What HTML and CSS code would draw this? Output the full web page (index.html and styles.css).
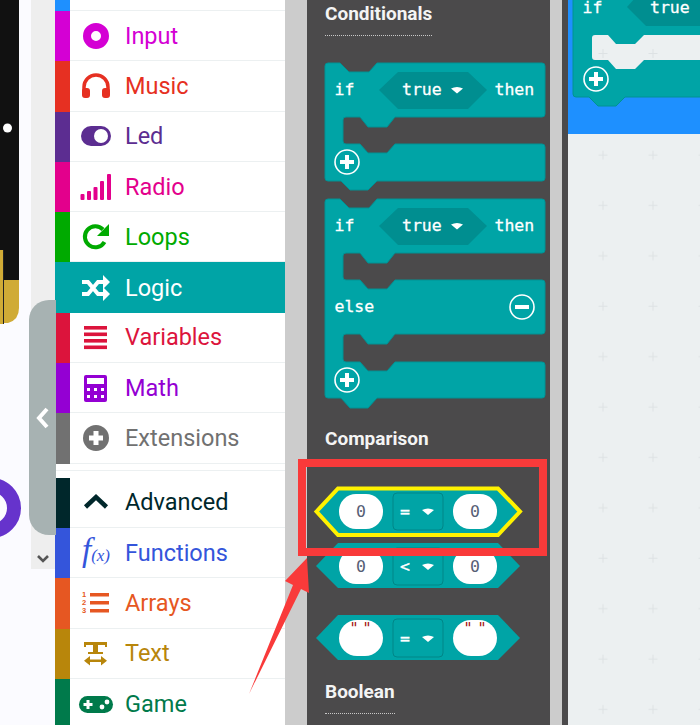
FILE: index.html
```html
<!DOCTYPE html>
<html lang="en">
<head>
    <meta charset="UTF-8">
    <title>Logic blocks</title>
    <link rel="stylesheet" href="styles.css">
</head>
<body>
<div class="editor">
    <!-- simulator edge -->
    <div class="sim">
        <svg class="sim-view" width="31" height="725" viewBox="0 0 31 725">
            <path d="M0 250 Q3 252 3 262 V323 H8 Q19 320 19 308 V280 H3 V250 Z" fill="#d0ab36"/>
            <path d="M0 250 Q3 252 3 262 V280 H19 V0 H0 Z" fill="#111"/>
            <rect x="0" y="250" width="3" height="74" fill="#d0ab36"/>
            <rect x="3" y="250" width="1" height="74" fill="#222"/>
            <circle cx="7.5" cy="128" r="4.5" fill="#fff"/>
            <circle cx="-9" cy="508" r="23" fill="none" stroke="#6633cc" stroke-width="14"/>
        </svg>
        <div class="sim-scroll">
            <svg class="scroll-down" width="14" height="10" viewBox="0 0 14 10"><path d="M2 2 L7 7 L12 2" fill="none" stroke="#555" stroke-width="2.6"/></svg>
        </div>
        <div class="sim-toggle">
            <svg width="14" height="22" viewBox="0 0 14 22"><path d="M11 2 L3 11 L11 20" fill="none" stroke="#fff" stroke-width="4"/></svg>
        </div>
    </div>

    <!-- toolbox -->
    <div class="toolbox">
        <div class="tb-row tb-cut c-basic"><span class="tb-bar"></span></div>
        <div class="tb-row c-input">
            <span class="tb-bar"></span>
            <span class="tb-icon"><svg width="32" height="32" viewBox="0 0 32 32"><circle cx="16" cy="16" r="9" fill="none" stroke="currentColor" stroke-width="8"/></svg></span>
            <span>Input</span>
        </div>
        <div class="tb-row c-music">
            <span class="tb-bar"></span>
            <span class="tb-icon"><svg width="32" height="32" viewBox="0 0 32 32"><path d="M4 22 V17 A12 12 0 0 1 28 17 V22" fill="none" stroke="currentColor" stroke-width="3.5"/><rect x="2" y="18" width="8" height="10" rx="3" fill="currentColor"/><rect x="22" y="18" width="8" height="10" rx="3" fill="currentColor"/></svg></span>
            <span>Music</span>
        </div>
        <div class="tb-row c-led">
            <span class="tb-bar"></span>
            <span class="tb-icon"><svg width="32" height="32" viewBox="0 0 32 32"><rect x="1" y="6" width="30" height="20" rx="10" fill="currentColor"/><circle cx="21" cy="16" r="7" fill="#fff"/></svg></span>
            <span>Led</span>
        </div>
        <div class="tb-row c-radio">
            <span class="tb-bar"></span>
            <span class="tb-icon"><svg width="32" height="32" viewBox="0 0 32 32" fill="currentColor"><rect x="0.5" y="23" width="4" height="6" rx="1"/><rect x="7" y="20" width="4" height="9" rx="1"/><rect x="13.5" y="16" width="4" height="13" rx="1"/><rect x="20" y="10" width="4" height="19" rx="1"/><rect x="27" y="3" width="4" height="26" rx="1"/></svg></span>
            <span>Radio</span>
        </div>
        <div class="tb-row c-loops">
            <span class="tb-bar"></span>
            <span class="tb-icon"><svg width="32" height="32" viewBox="0 0 32 32"><path d="M24.5 21 A10.5 10.5 0 1 1 23 8.5" fill="none" stroke="currentColor" stroke-width="4"/><path d="M29 3 V15 H17 Z" fill="currentColor"/></svg></span>
            <span>Loops</span>
        </div>
        <div class="tb-row tb-active">
            <span class="tb-bar"></span>
            <span class="tb-icon"><svg width="32" height="32" viewBox="0 0 32 32"><path d="M2 10 H8 L18 22 H24 M2 22 H8 L18 10 H24" fill="none" stroke="currentColor" stroke-width="4"/><path d="M23 3 L30 10 L23 17 Z M23 15 L30 22 L23 29 Z" fill="currentColor"/></svg></span>
            <span>Logic</span>
        </div>
        <div class="tb-row c-variables">
            <span class="tb-bar"></span>
            <span class="tb-icon"><svg width="32" height="32" viewBox="0 0 32 32" fill="currentColor"><rect x="4" y="5" width="23" height="3.6"/><rect x="4" y="11.5" width="23" height="3.6"/><rect x="4" y="18" width="23" height="3.6"/><rect x="4" y="24.5" width="23" height="3.6"/></svg></span>
            <span>Variables</span>
        </div>
        <div class="tb-row c-math">
            <span class="tb-bar"></span>
            <span class="tb-icon"><svg width="32" height="32" viewBox="0 0 32 32"><rect x="4" y="3" width="23" height="27" rx="2" fill="currentColor"/><rect x="7" y="6" width="17" height="6" fill="#fff"/><g fill="#fff"><rect x="7" y="16" width="3" height="3"/><rect x="14" y="16" width="3" height="3"/><rect x="21" y="16" width="3" height="3"/><rect x="7" y="23" width="3" height="3"/><rect x="14" y="23" width="3" height="3"/><rect x="21" y="23" width="3" height="3"/></g></svg></span>
            <span>Math</span>
        </div>
        <div class="tb-row c-extensions">
            <span class="tb-bar"></span>
            <span class="tb-icon"><svg width="32" height="32" viewBox="0 0 32 32"><circle cx="16" cy="16" r="13" fill="currentColor"/><path d="M16 9 V23 M9 16 H23" stroke="#fff" stroke-width="5"/></svg></span>
            <span>Extensions</span>
        </div>
        <div class="tb-sep"></div>
        <div class="tb-row c-advanced">
            <span class="tb-bar"></span>
            <span class="tb-icon"><svg width="32" height="32" viewBox="0 0 32 32"><path d="M5.5 21 L16 11 L26.5 21" fill="none" stroke="currentColor" stroke-width="4.5"/></svg></span>
            <span>Advanced</span>
        </div>
        <div class="tb-row c-functions">
            <span class="tb-bar"></span>
            <span class="tb-icon"><span class="fx">f<small>(x)</small></span></span>
            <span>Functions</span>
        </div>
        <div class="tb-row c-arrays">
            <span class="tb-bar"></span>
            <span class="tb-icon"><svg width="32" height="32" viewBox="0 0 32 32" fill="currentColor"><text class="list-num" x="2" y="10">1</text><text class="list-num" x="2" y="18">2</text><text class="list-num" x="2" y="26">3</text><rect x="10" y="6" width="19" height="3.5"/><rect x="10" y="14" width="19" height="3.5"/><rect x="10" y="22" width="19" height="3.5"/></svg></span>
            <span>Arrays</span>
        </div>
        <div class="tb-row c-text">
            <span class="tb-bar"></span>
            <span class="tb-icon"><svg width="32" height="32" viewBox="0 0 32 32" fill="currentColor"><path d="M4 5 H27 V10 H25 V8 H18 V15 H23 V17 H8 V15 H13 V8 H6 V10 H4 Z"/><rect x="8" y="22.5" width="15" height="2.5"/><path d="M4 23.7 L10 19 V28.5 Z M27 23.7 L21 19 V28.5 Z"/></svg></span>
            <span>Text</span>
        </div>
        <div class="tb-row c-game">
            <span class="tb-bar"></span>
            <span class="tb-icon"><svg width="36" height="32" viewBox="-2 0 36 32"><rect x="-1" y="8" width="34" height="17" rx="8.5" fill="currentColor"/><path d="M8 12 V21 M3.5 16.5 H12.5" stroke="#fff" stroke-width="3"/><circle cx="22" cy="19" r="2.4" fill="#fff"/><circle cx="27" cy="14" r="2.4" fill="#fff"/></svg></span>
            <span>Game</span>
        </div>
    </div>

    <div class="gutter gutter-left"></div>

    <!-- flyout with the logic blocks -->
    <div class="flyout">
        <div class="fly-title fly-title-first">Conditionals</div>

        <svg class="block block-if" width="220" height="130" viewBox="0 0 220 130">
            <path class="b-body" d="M0 4 Q0 1 3 1 H15 L24 10 H44 L52 1 H217 Q220 1 220 4 V52 Q220 55 217 55 H70 L62 65 H43 L35 55 H21 Q18 55 18 58 V79 Q18 82 21 82 H35 L43 91 H62 L70 82 H217 Q220 82 220 85 V116 Q220 119 217 119 H52 L43 128 H25 L16 119 H3 Q0 119 0 116 Z"/>
            <path class="b-hex" d="M54 28 L73 10 H143 L162 28 L143 47 H73 Z"/>
            <text class="b-text" x="9.5" y="33">if</text>
            <text class="b-text" x="77" y="33">true</text>
            <path class="b-arrow" d="M126 26.5 Q132 23.5 138 26.5 L132 31.5 Z"/>
            <text class="b-text" x="169.5" y="33">then</text>
            <circle class="b-ring" cx="22" cy="100" r="12"/>
            <path class="b-sign" d="M22 93 V107 M15 100 H29"/>
        </svg>

        <svg class="block block-else" width="220" height="212" viewBox="0 0 220 212">
            <path class="b-body" d="M0 4 Q0 1 3 1 H15 L24 10 H44 L52 1 H217 Q220 1 220 4 V52 Q220 55 217 55 H70 L62 65 H43 L35 55 H21 Q18 55 18 58 V79 Q18 82 21 82 H35 L43 91 H62 L70 82 H217 Q220 82 220 85 V133 Q220 136 217 136 H70 L62 146 H43 L35 136 H21 Q18 136 18 139 V161 Q18 164 21 164 H35 L43 173 H62 L70 164 H217 Q220 164 220 167 V197 Q220 200 217 200 H52 L43 210 H25 L16 200 H3 Q0 200 0 197 Z"/>
            <path class="b-hex" d="M54 28 L73 10 H143 L162 28 L143 47 H73 Z"/>
            <text class="b-text" x="9.5" y="33">if</text>
            <text class="b-text" x="77" y="33">true</text>
            <path class="b-arrow" d="M126 26.5 Q132 23.5 138 26.5 L132 31.5 Z"/>
            <text class="b-text" x="169.5" y="33">then</text>
            <text class="b-text" x="9.5" y="114">else</text>
            <circle class="b-ring" cx="197" cy="109" r="12"/>
            <path class="b-sign" d="M190 109 H204"/>
            <circle class="b-ring" cx="22" cy="182" r="12"/>
            <path class="b-sign" d="M22 175 V189 M15 182 H29"/>
        </svg>

        <div class="fly-title fly-title-compare">Comparison</div>

        <svg class="block block-eq" width="208" height="54" viewBox="0 0 208 54">
            <path class="b-fill b-selected" d="M2.5 26.5 L24 3.5 H184 L206 26.5 L184 50 H24 Z"/>
            <rect class="b-oval" x="25" y="9" width="44" height="35" rx="17"/>
            <text class="b-num" x="47" y="32">0</text>
            <rect class="b-drop" x="79" y="8" width="50" height="37" rx="4"/>
            <text class="b-text" x="86" y="32">=</text>
            <path class="b-arrow" d="M108 25 Q114 22 120 25 L114 30 Z"/>
            <rect class="b-oval" x="139" y="9" width="44" height="35" rx="17"/>
            <text class="b-num" x="161" y="32">0</text>
        </svg>

        <svg class="block block-lt" width="208" height="48" viewBox="0 0 208 48">
            <path class="b-fill" d="M2 24 L24 1 H184 L206 24 L184 46 H24 Z"/>
            <rect class="b-oval" x="25" y="7" width="44" height="35" rx="17"/>
            <text class="b-num" x="47" y="30">0</text>
            <rect class="b-drop" x="79" y="6" width="50" height="37" rx="4"/>
            <text class="b-text" x="86" y="30">&lt;</text>
            <path class="b-arrow" d="M108 23 Q114 20 120 23 L114 28 Z"/>
            <rect class="b-oval" x="139" y="7" width="44" height="35" rx="17"/>
            <text class="b-num" x="161" y="30">0</text>
        </svg>

        <svg class="block block-str" width="208" height="48" viewBox="0 0 208 48">
            <path class="b-fill" d="M2 24 L24 1 H184 L206 24 L184 46 H24 Z"/>
            <rect class="b-oval" x="25" y="6" width="44" height="36" rx="18"/>
            <text class="b-quote" x="40" y="20">"</text>
            <text class="b-quote" x="53" y="20">"</text>
            <rect class="b-drop" x="79" y="5" width="50" height="38" rx="4"/>
            <text class="b-text" x="86" y="30">=</text>
            <path class="b-arrow" d="M108 23 Q114 20 120 23 L114 28 Z"/>
            <rect class="b-oval" x="139" y="6" width="44" height="36" rx="18"/>
            <text class="b-quote" x="154" y="20">"</text>
            <text class="b-quote" x="168" y="20">"</text>
        </svg>

        <div class="fly-title fly-title-bool">Boolean</div>
    </div>

    <div class="gutter gutter-right"></div>
    <div class="strip"></div>

    <!-- workspace -->
    <div class="workspace">
        <div class="ws-blue">
            <svg width="132" height="134" viewBox="0 0 132 134">
                <path class="b-body" d="M5 -5 H136 V97 H57 L48 106 H30 L21 97 H8 Q5 97 5 94 Z"/>
                <path class="b-hex" d="M59 7 L78 26 H136 V-14 H78 Z"/>
                <text class="b-text" x="14.5" y="13">if</text>
                <text class="b-text" x="82" y="13">true</text>
                <path class="ws-hole" d="M27 35 H40 L48 44 H67 L76 35 H136 V60 H76 L67 69 H48 L40 60 H27 Q24 60 24 57 V38 Q24 35 27 35 Z"/>
                <path class="ws-plus" d="M35 49 V58 M30.5 53.5 H39.5 M85 49 V58 M80.5 53.5 H89.5"/>
                <circle class="b-ring" cx="28" cy="79" r="12"/>
                <path class="b-sign" d="M28 72 V86 M21 79 H35"/>
            </svg>
        </div>
        <svg class="ws-grid" width="132" height="591">
            <defs>
                <pattern id="ws-dots" width="50" height="50.4" patternUnits="userSpaceOnUse">
                    <path class="ws-plus" d="M35 16.5 V25.5 M30.5 21 H39.5"/>
                </pattern>
            </defs>
            <rect width="132" height="591" fill="url(#ws-dots)"/>
        </svg>
    </div>

    <!-- red marks drawn over the screenshot -->
    <div class="mark-box"></div>
    <svg class="mark-arrow" width="70" height="145" viewBox="0 0 70 145">
        <path d="M0 144 L44 35 L36 31 L58 8 L60 43 L52 39 Z" fill="#f93a3a"/>
    </svg>
</div>
</body>
</html>
```

FILE: styles.css
```css
body {
    margin: 0;
    background-color: #fbfbff;
    font-family: 'Roboto', sans-serif;
}
svg {
    display: block;
}

.editor {
    position: relative;
    display: flex;
    width: 700px;
    height: 725px;
    overflow: hidden;
}

/* simulator */
.sim {
    display: flex;
    width: 55px;
    flex-shrink: 0;
}
.sim-view {
    flex-shrink: 0;
}
.sim-scroll {
    display: flex;
    justify-content: center;
    align-items: flex-end;
    width: 24px;
    height: 569px;
    padding-bottom: 5px;
    box-sizing: border-box;
    background-color: #eeeeee;
}
.sim-toggle {
    position: absolute;
    left: 29px;
    top: 300px;
    width: 27px;
    height: 235px;
    display: flex;
    align-items: center;
    justify-content: center;
    padding-top: 1px;
    box-sizing: border-box;
    background-color: #a7b2b2;
    border-radius: 20px 0 0 20px;
}

/* toolbox */
.toolbox {
    width: 230px;
    flex-shrink: 0;
    background-color: white;
}
.tb-row {
    display: flex;
    align-items: center;
    height: 50.3px;
    box-sizing: border-box;
    border-bottom: 1px solid #ecf0f1;
    font-size: 23.5px;
    color: var(--cat);
}
.tb-cut {
    height: 11px;
}
.tb-bar {
    align-self: stretch;
    width: 15px;
    margin-bottom: -1px;
    flex-shrink: 0;
    background-color: var(--cat);
}
.tb-icon {
    display: flex;
    justify-content: center;
    align-items: center;
    width: 52px;
    margin-right: 3px;
    flex-shrink: 0;
}
.tb-sep {
    height: 6px;
    margin-bottom: 7px;
    border-bottom: 1px solid #ecf0f1;
}
.tb-active {
    background-color: #00a4a6;
    border-bottom: none;
    color: white;
}
.tb-active .tb-bar {
    background-color: transparent;
}

.c-basic { --cat: #1e90ff; }
.c-input { --cat: #d400d4; }
.c-music { --cat: #e63022; }
.c-led { --cat: #5c2d91; }
.c-radio { --cat: #e3008c; }
.c-loops { --cat: #00aa00; }
.c-variables { --cat: #dc143c; }
.c-math { --cat: #9400d3; }
.c-extensions { --cat: #717171; }
.c-advanced { --cat: #00272b; }
.c-functions { --cat: #3455db; }
.c-arrays { --cat: #e65722; }
.c-text { --cat: #b8860b; }
.c-game { --cat: #007a4b; }

.fx {
    font-family: 'Liberation Serif', serif;
    font-style: italic;
    font-size: 33px;
    line-height: 32px;
}
.fx small {
    font-size: 17px;
}
.list-num {
    font-family: 'Liberation Sans', sans-serif;
    font-size: 7.5px;
    font-weight: bold;
}

.gutter {
    background-color: #cccccc;
    flex-shrink: 0;
}
.gutter-left {
    width: 22px;
}
.gutter-right {
    width: 12px;
}
.strip {
    width: 6px;
    flex-shrink: 0;
    background-color: #4b4a4b;
}

/* flyout */
.flyout {
    display: flex;
    flex-direction: column;
    align-items: flex-start;
    width: 243px;
    padding-left: 18px;
    box-sizing: border-box;
    flex-shrink: 0;
    background-color: #4b4a4b;
}
.fly-title {
    padding-bottom: 11px;
    border-bottom: 1px dotted #c8c8c8;
    font-size: 19px;
    font-weight: bold;
    line-height: 20px;
    color: #f4f4f4;
}
.fly-title-first {
    margin-top: 4px;
}
.fly-title-compare {
    margin-top: 19px;
}
.fly-title-bool {
    margin-top: 20px;
}
.block {
    flex-shrink: 0;
    overflow: visible;
}
.block-if {
    margin-top: 26px;
}
.block-else {
    margin-top: 6px;
}
.block-eq {
    margin: 24px 0 0 -11px;
}
.block-lt {
    margin: 3px 0 0 -11px;
}
.block-str {
    margin: 24px 0 0 -11px;
}

/* block parts */
.b-body, .b-fill {
    fill: #00a4a6;
}
.b-body {
    stroke: #009294;
    stroke-width: 1;
}
.b-selected {
    stroke: #fff200;
    stroke-width: 4;
}
.b-hex {
    fill: #008e90;
}
.b-text {
    font-family: 'DejaVu Sans Mono', monospace;
    font-size: 16.5px;
    fill: white;
    stroke: white;
    stroke-width: 0.3;
}
.b-num {
    font-family: 'DejaVu Sans Mono', monospace;
    font-size: 16.5px;
    fill: #575e75;
    text-anchor: middle;
}
.b-quote {
    font-family: 'DejaVu Sans Mono', monospace;
    font-size: 15px;
    fill: #a31515;
    text-anchor: middle;
}
.b-arrow {
    fill: white;
}
.b-ring {
    fill: none;
    stroke: white;
    stroke-width: 1.6;
}
.b-sign {
    fill: none;
    stroke: white;
    stroke-width: 4;
}
.b-oval {
    fill: white;
}
.b-drop {
    fill: #00a4a6;
    stroke: #008688;
    stroke-width: 1;
}

/* workspace */
.workspace {
    width: 132px;
    flex-shrink: 0;
    background-color: #ecf0f1;
}
.ws-blue {
    height: 134px;
    background-color: #1e90ff;
}
.ws-hole {
    fill: #ecf0f1;
}
.ws-plus {
    fill: none;
    stroke: #dde2e4;
    stroke-width: 1;
}

/* annotation */
.mark-box {
    position: absolute;
    left: 298px;
    top: 459px;
    width: 249px;
    height: 97px;
    border: 8.5px solid #f93a3a;
    box-sizing: border-box;
}
.mark-arrow {
    position: absolute;
    left: 249px;
    top: 550px;
}
```
